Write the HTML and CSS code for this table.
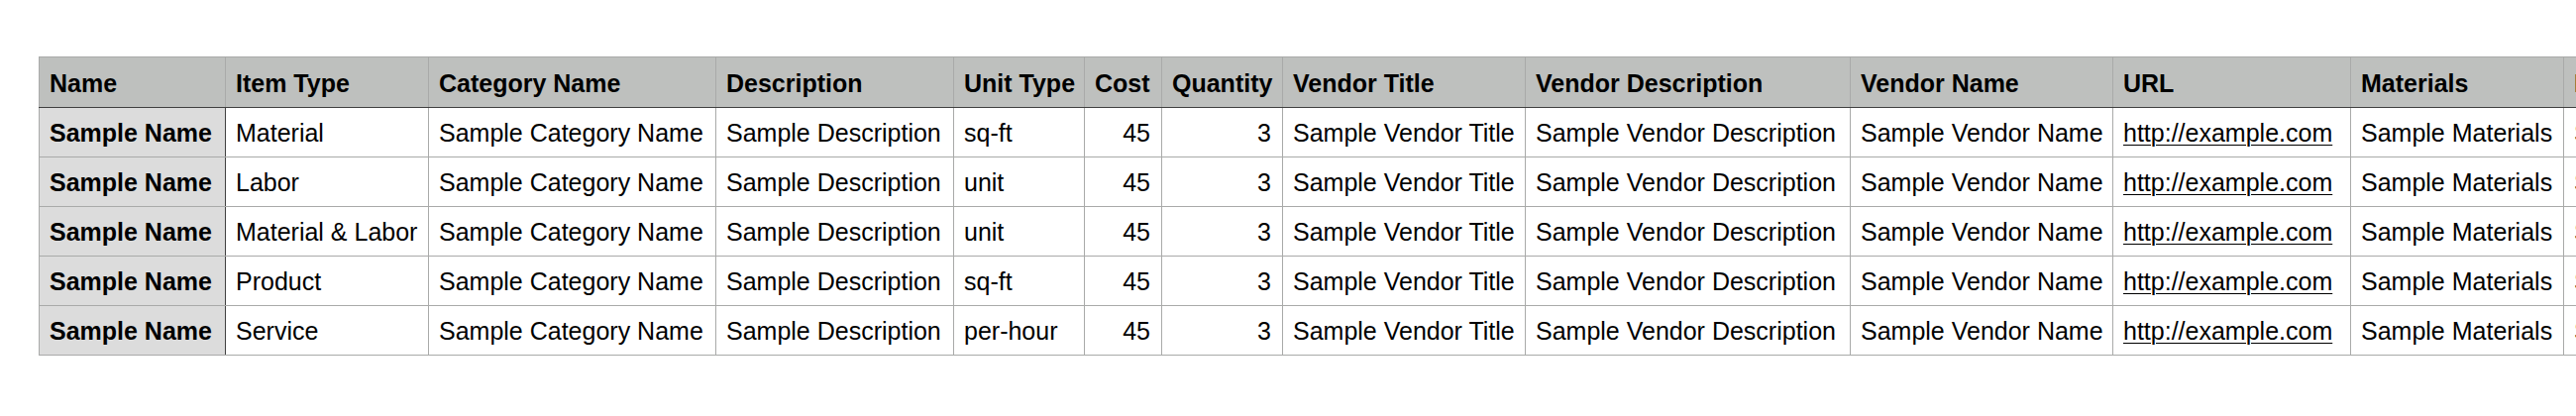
FILE: index.html
```html
<!DOCTYPE html>
<html lang="en">
<head>
<meta charset="utf-8">
<title>Items</title>
<link rel="stylesheet" href="styles.css">
</head>
<body>
<div class="sheet">
<table class="grid">
  <colgroup>
    <col class="c-name"><col class="c-type"><col class="c-cat"><col class="c-desc"><col class="c-unit"><col class="c-cost"><col class="c-qty"><col class="c-vtitle"><col class="c-vdesc"><col class="c-vname"><col class="c-url"><col class="c-mat"><col class="c-notes">
  </colgroup>
  <thead>
    <tr>
      <th>Name</th><th>Item Type</th><th>Category Name</th><th>Description</th><th>Unit Type</th><th>Cost</th><th>Quantity</th><th>Vendor Title</th><th>Vendor Description</th><th>Vendor Name</th><th>URL</th><th>Materials</th><th>Notes</th>
    </tr>
  </thead>
  <tbody>
    <tr>
      <th class="rowhead">Sample Name</th><td>Material</td><td>Sample Category Name</td><td>Sample Description</td><td>sq-ft</td><td class="num">45</td><td class="num">3</td><td>Sample Vendor Title</td><td>Sample Vendor Description</td><td>Sample Vendor Name</td><td><a href="#">http://example.com</a></td><td>Sample Materials</td><td>Sample Notes</td>
    </tr>
    <tr>
      <th class="rowhead">Sample Name</th><td>Labor</td><td>Sample Category Name</td><td>Sample Description</td><td>unit</td><td class="num">45</td><td class="num">3</td><td>Sample Vendor Title</td><td>Sample Vendor Description</td><td>Sample Vendor Name</td><td><a href="#">http://example.com</a></td><td>Sample Materials</td><td>Sample Notes</td>
    </tr>
    <tr>
      <th class="rowhead">Sample Name</th><td>Material &amp; Labor</td><td>Sample Category Name</td><td>Sample Description</td><td>unit</td><td class="num">45</td><td class="num">3</td><td>Sample Vendor Title</td><td>Sample Vendor Description</td><td>Sample Vendor Name</td><td><a href="#">http://example.com</a></td><td>Sample Materials</td><td>Sample Notes</td>
    </tr>
    <tr>
      <th class="rowhead">Sample Name</th><td>Product</td><td>Sample Category Name</td><td>Sample Description</td><td>sq-ft</td><td class="num">45</td><td class="num">3</td><td>Sample Vendor Title</td><td>Sample Vendor Description</td><td>Sample Vendor Name</td><td><a href="#">http://example.com</a></td><td>Sample Materials</td><td>Sample Notes</td>
    </tr>
    <tr>
      <th class="rowhead">Sample Name</th><td>Service</td><td>Sample Category Name</td><td>Sample Description</td><td>per-hour</td><td class="num">45</td><td class="num">3</td><td>Sample Vendor Title</td><td>Sample Vendor Description</td><td>Sample Vendor Name</td><td><a href="#">http://example.com</a></td><td>Sample Materials</td><td>Sample Notes</td>
    </tr>
  </tbody>
</table>
</div>
</body>
</html>
```

FILE: styles.css
```css
html, body {
  margin: 0;
  padding: 0;
  background: #ffffff;
}

body {
  font-family: "Liberation Sans", Arial, Helvetica, sans-serif;
  color: #000000;
  overflow: hidden;
}

.sheet {
  padding: 57px 0 0 39px;
  width: max-content;
}

.grid {
  border-collapse: collapse;
  table-layout: fixed;
  width: 2798px;
  font-size: 25px;
  line-height: 30px;
  border: 1px solid #a9aaa9;
}

.c-name { width: 188px; }
.c-type { width: 205px; }
.c-cat { width: 290px; }
.c-desc { width: 240px; }
.c-unit { width: 132px; }
.c-cost { width: 78px; }
.c-qty { width: 122px; }
.c-vtitle { width: 245px; }
.c-vdesc { width: 328px; }
.c-vname { width: 265px; }
.c-url { width: 240px; }
.c-mat { width: 215px; }
.c-notes { width: 250px; }

.grid th,
.grid td {
  border: 1px solid #a9aaa9;
  padding: 10px 10px 9px 10px;
  text-align: left;
  white-space: nowrap;
  overflow: hidden;
  vertical-align: middle;
}

.grid thead th {
  background: #bec0be;
  font-weight: bold;
  padding: 11px 10px 9px 10px;
  border-bottom: 1px solid #404040;
}

.grid .rowhead {
  background: #dcdcdc;
  font-weight: bold;
  border-right: 1px solid #404040;
}

.grid td.num {
  text-align: right;
  padding-right: 11px;
}

.grid a {
  color: #000000;
  text-decoration: underline;
  text-underline-offset: 3px;
  text-decoration-thickness: 1px;
}
```
